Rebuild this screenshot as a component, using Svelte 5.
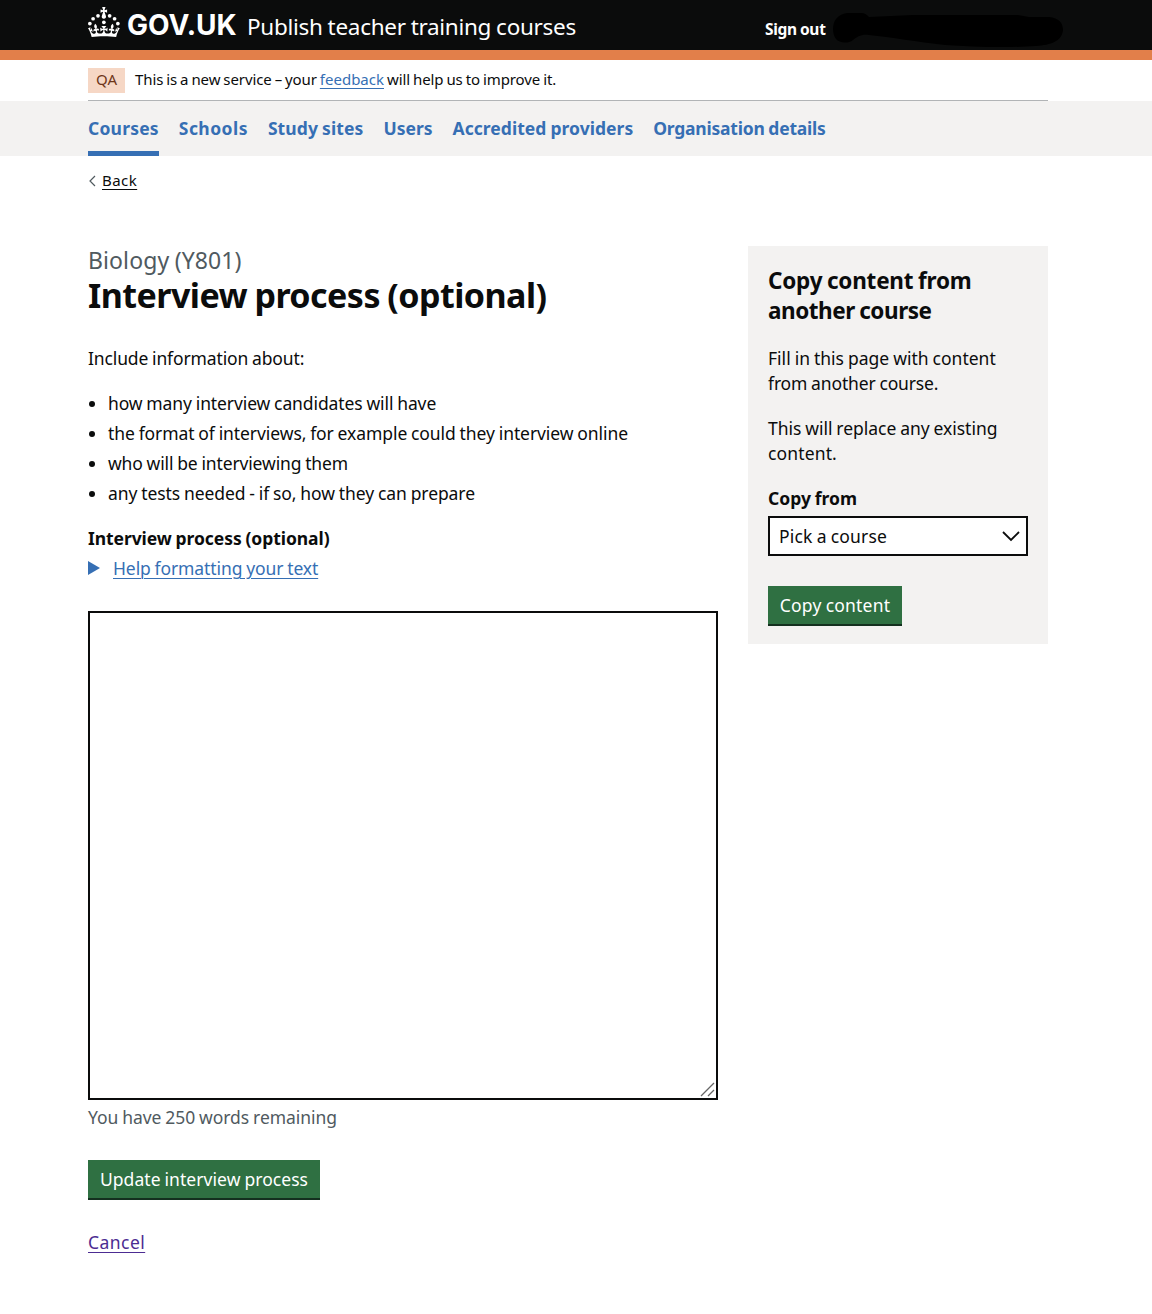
<script>
  const nav = ['Courses', 'Schools', 'Study sites', 'Users', 'Accredited providers', 'Organisation details'];
  const points = [
    'how many interview candidates will have',
    'the format of interviews, for example could they interview online',
    'who will be interviewing them',
    'any tests needed - if so, how they can prepare'
  ];
</script>

<header class="header">
  <div class="container header-row">
    <svg class="crown" viewBox="0 0 64 60" width="32" height="30" fill="currentColor" aria-hidden="true">
      <circle cx="20" cy="17.6" r="3.7" /><circle cx="10.2" cy="23.5" r="3.7" /><circle cx="3.7" cy="33.2" r="3.7" />
      <circle cx="31.7" cy="30.6" r="3.7" /><circle cx="43.3" cy="17.6" r="3.7" /><circle cx="53.2" cy="23.5" r="3.7" /><circle cx="59.7" cy="33.2" r="3.7" />
      <path d="M33.1,9.8c.2-.1.3-.3.5-.5l4.6,2.4v-6.8l-4.6,1.5c-.1-.2-.3-.3-.5-.5l1.9-5.9h-6.7l1.9,5.9c-.2.1-.3.3-.5.5l-4.6-1.5v6.8l4.6-2.4c.1.2.3.3.5.5l-2.6,8c-.9,2.8,1.2,5.7,4.1,5.7h0c3,0,5.1-2.9,4.1-5.7l-2.6-8ZM37,37.9s-3.4,3.8-4.1,6.1c2.2,0,4.2-.5,6.4-2.8l-.7,8.5c-2-2.8-4.4-4.1-5.7-3.8.1,3.1.5,6.7,5.8,7.2,3.7.3,6.7-1.5,7-3.8.4-2.6-2-4.3-3.7-1.6-1.4-4.5,2.4-6.1,4.9-3.2-1.9-4.5-1.8-7.7,2.4-10.9,3,4,2.6,7.3-1.2,11.1,2.4-1.3,6.2,0,4,4.6-1.2-2.8-3.7-2.2-4.2.2-.3,1.7.7,3.7,3,4.2,1.9.3,4.7-.9,7-5.9-1.3,0-2.4.7-3.9,1.7l2.4-8c.6,2.3,1.4,3.7,2.2,4.5.6-1.6.5-2.8,0-5.3l5,1.8c-2.6,3.6-5.2,8.7-7.3,17.5-7.4-1.1-15.7-1.7-24.5-1.7h0c-8.8,0-17.1.6-24.5,1.7-2.1-8.9-4.7-13.9-7.3-17.5l5-1.8c-.5,2.5-.6,3.7,0,5.3.8-.8,1.6-2.3,2.2-4.5l2.4,8c-1.5-1-2.6-1.7-3.9-1.7,2.3,5,5.2,6.2,7,5.9,2.3-.4,3.3-2.4,3-4.2-.5-2.4-3-3.1-4.2-.2-2.2-4.6,1.6-6,4-4.6-3.7-3.7-4.2-7.1-1.2-11.1,4.2,3.2,4.3,6.4,2.4,10.9,2.5-2.8,6.3-1.3,4.9,3.2-1.8-2.7-4.1-1-3.7,1.6.3,2.3,3.3,4.1,7,3.8,5.4-.5,5.7-4.2,5.8-7.2-1.3-.2-3.7,1-5.7,3.8l-.7-8.5c2.2,2.3,4.2,2.7,6.4,2.8-.7-2.3-4.1-6.1-4.1-6.1h10.6,0Z" />
    </svg>
    <span class="brand">GOV.UK</span>
    <span class="service">Publish teacher training courses</span>
    <a class="signout" href="#signout">Sign out</a>
    <svg class="redaction" viewBox="0 0 230 36" width="230" height="36" aria-hidden="true">
      <path d="M14 1H28C32 1 34 3 36 5L80 3L185 3L196 5H216C226 6 230 11 230 18C229 29 218 33 203 34C175 36 140 35 112 33C84 30 58 25 36 23C28 22 24 25 20 28C15 32 6 31 3 27C-1 22 -1 12 3 7Q7 2 14 1Z" />
    </svg>
  </div>
</header>

<div class="container">
  <div class="phase">
    <strong class="tag">QA</strong>
    <span class="phase-text">This is a new service – your <a href="#feedback">feedback</a> will help us to improve it.</span>
  </div>
</div>

<nav class="nav">
  <div class="container nav-list">
    {#each nav as item, i}
      <a class="nav-{i}" class:current={i === 0} href="#nav">{item}</a>
    {/each}
  </div>
</nav>

<div class="container">
  <div class="back">
    <svg width="8" height="12" viewBox="0 0 8 12" aria-hidden="true"><path d="M7 1L2 6L7 11" fill="none" stroke="#505a5f" stroke-width="1.2" /></svg>
    <a href="#back">Back</a>
  </div>

  <div class="columns">
    <main>
      <div class="caption">Biology (Y801)</div>
      <h1>Interview process (optional)</h1>
      <p class="intro">Include information about:</p>
      <ul>
        {#each points as point, i}
          <li class="point-{i}">{point}</li>
        {/each}
      </ul>
      <label class="field-label" for="process">Interview process (optional)</label>
      <div class="help">
        <svg width="12" height="14" viewBox="0 0 12 14" aria-hidden="true"><path d="M0 0L12 7L0 14Z" fill="#366fb4" /></svg>
        <a href="#help">Help formatting your text</a>
      </div>
      <div class="textbox">
        <textarea id="process"></textarea>
        <svg class="grip" width="15" height="15" viewBox="0 0 15 15" aria-hidden="true"><path d="M1 14L14 1M8 14L14 8" fill="none" stroke="#666" stroke-width="1.3" /></svg>
      </div>
      <div class="count">You have 250 words remaining</div>
      <button class="update" type="button">Update interview process</button>
      <div class="cancel"><a href="#cancel">Cancel</a></div>
    </main>

    <aside>
      <h2>Copy content from<br /><span class="title-end">another course</span></h2>
      <p><span class="fill-start">Fill in this page with content</span><br /><span class="fill-end">from another course.</span></p>
      <p><span class="replace-start">This will replace any existing</span><br /><span class="replace-end">content.</span></p>
      <div class="copy-label">Copy from</div>
      <div class="select">
        <span>Pick a course</span>
        <svg width="18" height="11" viewBox="0 0 18 11" aria-hidden="true"><path d="M1 1L9 9L17 1" fill="none" stroke="#0b0c0c" stroke-width="1.8" /></svg>
      </div>
      <button class="copy" type="button">Copy content</button>
    </aside>
  </div>
</div>

<style>
  :global(body) { background: #fff; }
  :global(#app) {
    font-family: 'Noto Sans', 'Open Sans', sans-serif;
    font-size: 17.5px;
    line-height: 25px;
    word-spacing: -0.6px;
    color: #0b0c0c;
  }
  .container { width: 960px; margin-left: 88px; }
  p, h1, h2, ul { margin: 0; padding: 0; }
  p, h1, h2, li, a, span, button, label { white-space: nowrap; }
  a { text-decoration-thickness: 1px; text-underline-offset: 3px; color: #366fb4; }

  .header { height: 50px; background: #0b0c0c; border-bottom: 10px solid #e27f4a; color: #fff; }
  .header-row { display: flex; align-items: flex-start; height: 50px; }
  .crown { margin-top: 7px; flex: none; }
  .brand { margin: 6px 0 0 7px; width: 112px; font-family: Inter, sans-serif; font-size: 28px; line-height: 38px; font-weight: 700; }
  .service { margin: 12px 0 0 8px; width: 518px; font-size: 22.5px; line-height: 30px; letter-spacing: -0.29px; }
  .signout { margin-top: 17px; width: 68px; font-size: 15.5px; font-weight: 700; letter-spacing: -0.3px; color: #fff; text-decoration: none; }
  .redaction { margin: 12px -20px 0 0; flex: none; }

  .phase { display: flex; align-items: flex-start; height: 32px; padding-top: 8px; border-bottom: 1px solid #b1b4b6; font-size: 15px; line-height: 23px; }
  .phase-text { letter-spacing: -0.1px; word-spacing: -0.8px; }
  .phase-text a { letter-spacing: 0; }
  .tag { width: 37px; height: 25px; margin-right: 10px; background: #f6d7c5; color: #6e3619; font-weight: 400; text-align: center; }

  .nav { background: #f3f2f1; }
  .nav-list { display: flex; gap: 20px; height: 55px; font-weight: 700; }
  .nav-list a { padding-top: 15px; height: 35px; text-decoration: none; }
  .nav-list .current { border-bottom: 5px solid #366fb4; }
  .nav-0 { letter-spacing: 0.2px; }
  .nav-1 { letter-spacing: 0.45px; }
  .nav-2 { letter-spacing: 0.1px; }
  .nav-4 { letter-spacing: 0.04px; }
  .nav-5 { letter-spacing: -0.22px; }

  .back { display: flex; align-items: center; gap: 6px; height: 20px; padding-top: 15px; font-size: 15px; line-height: 20px; }
  .back a { color: #0b0c0c; letter-spacing: 0.45px; margin-top: -2px; }

  .columns { display: flex; justify-content: space-between; align-items: flex-start; padding-top: 55px; }
  main { width: 630px; }
  .caption { margin-top: -1px; font-size: 23px; line-height: 30px; letter-spacing: 0.1px; color: #505a5f; }
  h1 { font-size: 34px; line-height: 40px; margin-bottom: 31px; letter-spacing: -0.53px; word-spacing: -1px; }
  .intro { margin-bottom: 20px; letter-spacing: -0.13px; }
  ul { padding-left: 20px; margin-bottom: 20px; }
  li { margin-bottom: 5px; }
  .point-0 { letter-spacing: -0.1px; }
  .point-1 { letter-spacing: -0.08px; }
  .point-2 { letter-spacing: -0.13px; }
  .point-3 { letter-spacing: -0.075px; }
  .field-label { display: block; font-weight: 700; margin-bottom: 5px; letter-spacing: -0.07px; }
  .help { display: flex; align-items: center; gap: 13px; margin-bottom: 30px; letter-spacing: -0.1px; }
  .help svg { margin-bottom: 1px; }
  .textbox { position: relative; height: 489px; margin-bottom: 5px; }
  textarea { box-sizing: border-box; display: block; width: 100%; height: 489px; border: 2px solid #0b0c0c; resize: none; background: #fff; }
  .grip { position: absolute; right: 3px; bottom: 3px; }
  .count { color: #505a5f; margin-bottom: 30px; letter-spacing: -0.05px; }
  button { display: block; height: 38px; padding: 0; border: 0; font: inherit; word-spacing: -0.6px; color: #fff; background: #2f7042; box-shadow: 0 2px 0 #14301f; text-align: center; }
  .update { width: 232px; margin-bottom: 32px; letter-spacing: 0.05px; }
  .cancel a { color: #4c2c92; letter-spacing: 0.45px; }

  aside { box-sizing: border-box; width: 300px; height: 398px; padding: 20px; background: #f3f2f1; }
  h2 { font-size: 22.5px; line-height: 30px; margin-bottom: 20px; letter-spacing: -0.21px; word-spacing: -1px; }
  .title-end { letter-spacing: -0.46px; }
  aside p { margin-bottom: 20px; }
  .fill-start { letter-spacing: 0.01px; }
  .fill-end { letter-spacing: -0.14px; }
  .replace-start { letter-spacing: -0.03px; }
  .replace-end { letter-spacing: 0.14px; }
  .copy-label { font-weight: 700; margin-bottom: 5px; }
  .select { box-sizing: border-box; display: flex; align-items: center; justify-content: space-between; height: 40px; padding: 0 6px 0 9px; border: 2px solid #0b0c0c; background: #fff; margin-bottom: 30px; letter-spacing: 0.17px; }
  .copy { width: 134px; letter-spacing: 0.2px; }
</style>
